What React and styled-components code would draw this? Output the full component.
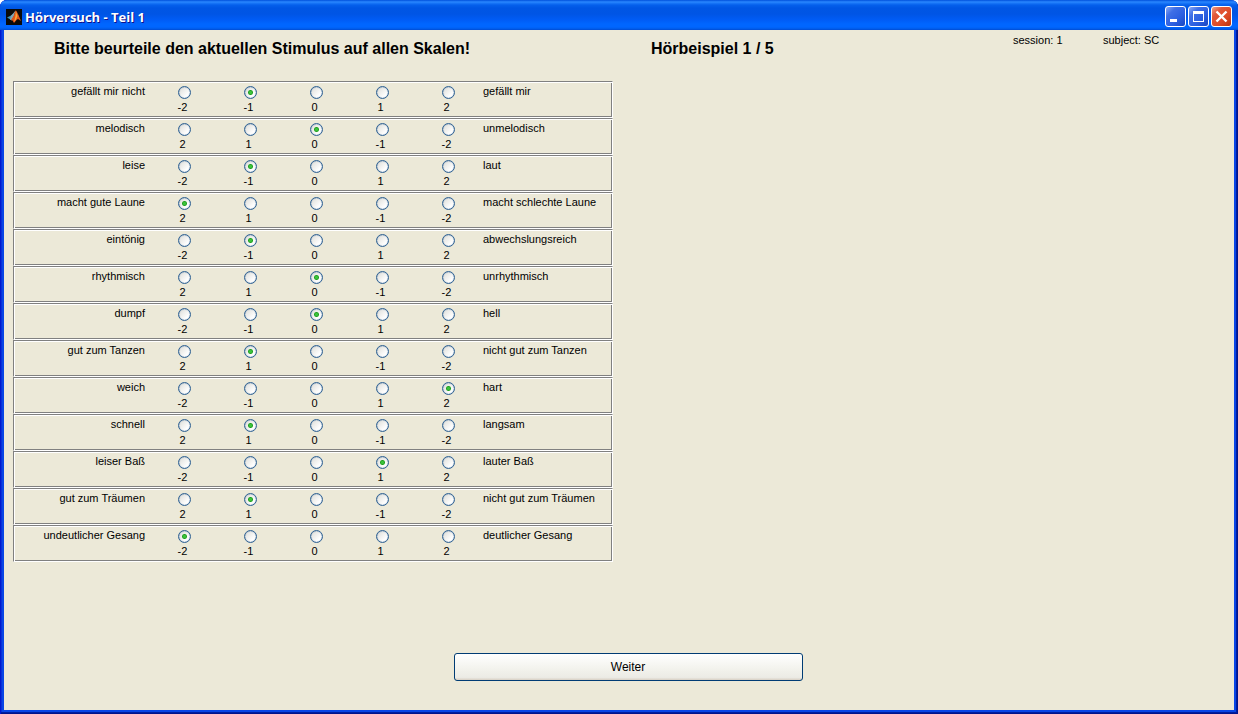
import React, { useState } from "react";
import styled, { createGlobalStyle } from "styled-components";

const GlobalStyle = createGlobalStyle`
  * { box-sizing: border-box; }
  body {
    margin: 0;
    background: #fff;
    color: #000;
    font-family: "Liberation Sans", Arial, sans-serif;
    font-size: 11px;
    line-height: 13px;
  }
`;

const Window = styled.div`
  display: flex;
  flex-direction: column;
  min-height: 100vh;
  border-radius: 7px 7px 0 0;
  overflow: hidden;
  background: #0845e6;
  box-shadow: inset 1px 0 #0019cf, inset -1px -1px #00138c, inset -2px -2px #001ea0, inset 2px 0 #0831d9;
`;

const TitleBar = styled.header`
  display: flex;
  align-items: center;
  gap: 3px;
  height: 30px;
  padding: 3px 6px 0;
  background: linear-gradient(
    to bottom,
    #0050dc 0px, #2b88ff 2px, #1a78f8 3px, #0560ec 5px, #0056e4 8px,
    #0055e5 14px, #005cf6 20px, #0066ff 24px, #0066ff 27px, #005be8 29px, #0048d0 30px
  );
`;

const Title = styled.h1`
  flex: 1;
  margin: 0;
  color: #fff;
  font: bold 13px/16px "Trebuchet MS", "Open Sans", sans-serif;
  text-shadow: 1px 1px #0f1089;
`;

const Controls = styled.div`
  display: flex;
  gap: 2px;
`;

const ControlButton = styled.button`
  width: 21px;
  height: 21px;
  padding: 0;
  border: 1px solid #fff;
  border-radius: 3px;
  background: ${(p) =>
    p.$danger
      ? "linear-gradient(135deg, #f0a188 0%, #e2593a 28%, #dd4a26 65%, #b8340f 100%)"
      : "linear-gradient(135deg, #8aa9f5 0%, #3f6fe6 28%, #2a5ee0 65%, #1846c0 100%)"};
  svg { display: block; }
`;

const Client = styled.main`
  flex: 1;
  margin: 0 4px 4px;
  background: #ece9d8;
`;

const Header = styled.div`
  display: grid;
  grid-template-columns: 597fr 362fr 90fr 131fr;
  padding: 4px 0 0 50px;
`;

const Heading = styled.h2`
  margin: 0;
  padding-top: 5px;
  font-size: 16px;
  line-height: 20px;
`;

const Meta = styled.span``;

const Scales = styled.div`
  width: 600px;
  max-width: 100%;
  margin: 22px 0 0 9px;
`;

const ScaleRow = styled.div`
  display: grid;
  grid-template-columns: 138px repeat(5, 66px) 1fr;
  height: 37px;
  padding-top: 3px;
  border: 1px solid;
  border-color: #808080 #fff #fff #808080;
  box-shadow: inset 1px 1px #fff, inset -1px -1px #808080;
`;

const Pole = styled.span`
  padding: 0 7px 0 1px;
  text-align: ${(p) => p.$align};
`;

const Choice = styled.label`
  display: flex;
  flex-direction: column;
  align-items: center;
  gap: 2px;
  padding: 1px 1px 0 0;
`;

const Radio = styled.input`
  appearance: none;
  width: 13px;
  height: 13px;
  margin: 0;
  border: 1px solid #2f6193;
  border-radius: 50%;
  box-shadow: inset 0 0 1px #2f6193;
  background:
    ${(p) => (p.checked ? "radial-gradient(circle, #3cc43c 0 1px, #21a121 2px, transparent 3px)," : "")}
    linear-gradient(135deg, #dcdcd7, #fff 75%);
`;

const Value = styled.span`
  padding-right: 4px;
`;

const Footer = styled.div`
  display: flex;
  justify-content: center;
  padding: 91px 0 29px 18px;
`;

const NextButton = styled.button`
  width: 349px;
  height: 28px;
  border: 1px solid #003c74;
  border-radius: 3px;
  background: linear-gradient(#fff, #f2f2ec 60%, #ecebe5 90%, #d8d0c4);
  color: #000;
  font: 12px/16px "Liberation Sans", Arial, sans-serif;
`;

const UP = [-2, -1, 0, 1, 2];
const DOWN = [2, 1, 0, -1, -2];

const SCALES = [
  ["gefällt mir nicht", "gefällt mir", UP, 1],
  ["melodisch", "unmelodisch", DOWN, 2],
  ["leise", "laut", UP, 1],
  ["macht gute Laune", "macht schlechte Laune", DOWN, 0],
  ["eintönig", "abwechslungsreich", UP, 1],
  ["rhythmisch", "unrhythmisch", DOWN, 2],
  ["dumpf", "hell", UP, 2],
  ["gut zum Tanzen", "nicht gut zum Tanzen", DOWN, 1],
  ["weich", "hart", UP, 4],
  ["schnell", "langsam", DOWN, 1],
  ["leiser Baß", "lauter Baß", UP, 3],
  ["gut zum Träumen", "nicht gut zum Träumen", DOWN, 1],
  ["undeutlicher Gesang", "deutlicher Gesang", UP, 0],
];

function Scale({ left, right, values, initial }) {
  const [selected, setSelected] = useState(initial);
  return (
    <ScaleRow role="radiogroup" aria-label={`${left} – ${right}`}>
      <Pole $align="right">{left}</Pole>
      {values.map((value, i) => (
        <Choice key={value}>
          <Radio type="radio" name={left} value={value} checked={selected === i} onChange={() => setSelected(i)} />
          <Value>{value}</Value>
        </Choice>
      ))}
      <Pole $align="left">{right}</Pole>
    </ScaleRow>
  );
}

function MatlabIcon() {
  return (
    <svg width="16" height="16" viewBox="0 0 16 16" aria-hidden="true">
      <rect width="16" height="16" fill="#0a0a0a" />
      <path d="M1 8.5 5 6.5 7 7.5 5 11 3.5 10Z" fill="#3b8fb5" />
      <path d="M5 6.5 7.5 4 9.5 1.5 8 7 5.5 11.5 4 10.5Z" fill="#7fa9b8" />
      <path d="M9.5 1.5 7.5 7 5 11 6.5 11.5 8 14 10.5 11 12 10 15 12 12.5 6 10.5 2Z" fill="#e0551a" />
      <path d="M9.8 2 9.5 7 8 13 10 10.5 11.5 7Z" fill="#f8a83a" />
    </svg>
  );
}

export default function App() {
  return (
    <>
      <GlobalStyle />
      <Window>
        <TitleBar>
          <MatlabIcon />
          <Title>Hörversuch - Teil 1</Title>
          <Controls>
            <ControlButton aria-label="Minimieren">
              <svg width="19" height="19"><rect x="4" y="12" width="7" height="3" fill="#fff" /></svg>
            </ControlButton>
            <ControlButton aria-label="Maximieren">
              <svg width="19" height="19">
                <path d="M4 4H15V15H4ZM5 7V14H14V7Z" fill="#fff" fillRule="evenodd" />
              </svg>
            </ControlButton>
            <ControlButton $danger aria-label="Schließen">
              <svg width="19" height="19"><path d="M4.500 4.500 14.500 14.500M14.500 4.500 4.500 14.500" stroke="#fff" strokeWidth="2.400" /></svg>
            </ControlButton>
          </Controls>
        </TitleBar>
        <Client>
          <Header>
            <Heading>Bitte beurteile den aktuellen Stimulus auf allen Skalen!</Heading>
            <Heading>Hörbeispiel 1 / 5</Heading>
            <Meta>session: 1</Meta>
            <Meta>subject: SC</Meta>
          </Header>
          <Scales>
            {SCALES.map(([left, right, values, initial]) => (
              <Scale key={left} left={left} right={right} values={values} initial={initial} />
            ))}
          </Scales>
          <Footer>
            <NextButton>Weiter</NextButton>
          </Footer>
        </Client>
      </Window>
    </>
  );
}
